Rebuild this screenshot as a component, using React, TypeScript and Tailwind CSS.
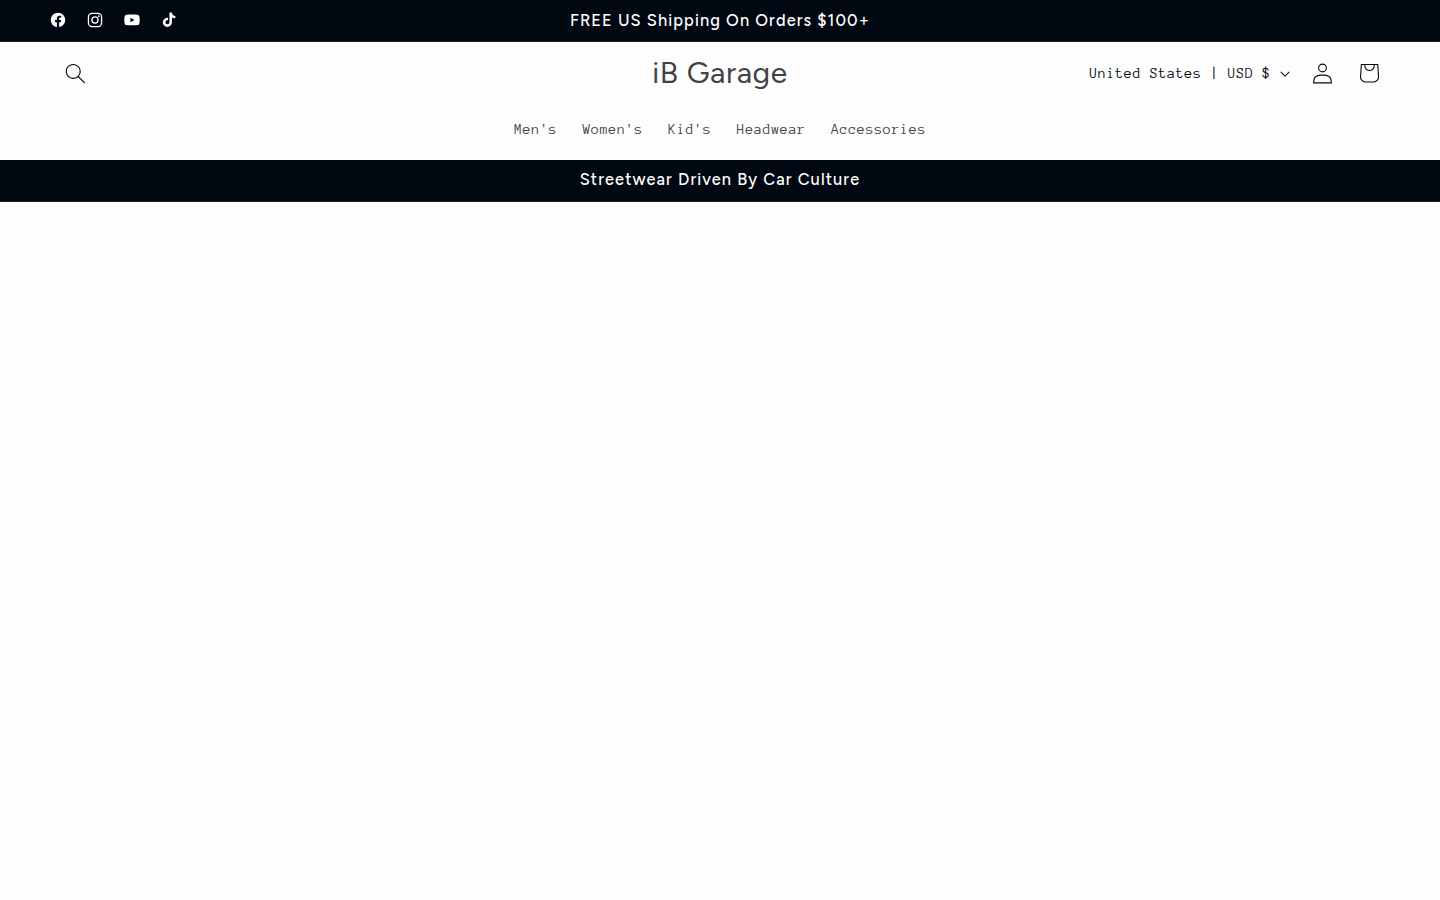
import React from 'react';

const socialLinks = [
  {
    name: 'Facebook',
    icon: (
      <path d="M18 10.049C18 5.603 14.419 2 10 2c-4.419 0-8 3.603-8 8.049C2 14.067 4.925 17.396 8.75 18v-5.624H6.719v-2.328h2.03V8.275c0-2.017 1.195-3.132 3.023-3.132.874 0 1.79.158 1.79.158v1.98h-1.009c-.994 0-1.303.621-1.303 1.258v1.51h2.219l-.355 2.326H11.25V18c3.825-.604 6.75-3.933 6.75-7.951Z" />
    ),
  },
  {
    name: 'Instagram',
    icon: (
      <>
        <rect x="2.72" y="2.72" width="14.56" height="14.56" rx="3.9" fill="none" stroke="currentColor" strokeWidth="1.45" />
        <circle cx="10" cy="10" r="3.4" fill="none" stroke="currentColor" strokeWidth="1.45" />
        <circle cx="14.27" cy="5.73" r="0.96" />
      </>
    ),
  },
  {
    name: 'YouTube',
    icon: (
      <path d="M18.16 5.87c.34 1.309.34 4.08.34 4.08s0 2.771-.34 4.08a2.125 2.125 0 0 1-1.53 1.53c-1.309.34-6.63.34-6.63.34s-5.321 0-6.63-.34a2.125 2.125 0 0 1-1.53-1.53c-.34-1.309-.34-4.08-.34-4.08s0-2.771.34-4.08a2.173 2.173 0 0 1 1.53-1.53C4.679 4 10 4 10 4s5.321 0 6.63.34a2.173 2.173 0 0 1 1.53 1.53ZM8.3 12.5l4.42-2.55L8.3 7.4v5.1Z" />
    ),
  },
  {
    name: 'TikTok',
    icon: (
      <path d="M10.511 1.705h2.74s-.157 3.51 3.795 3.768v2.711s-2.114.129-3.796-1.158l.028 5.606A5.073 5.073 0 1 1 8.213 7.56h.708v2.785a2.298 2.298 0 1 0 1.618 2.205L10.51 1.705Z" />
    ),
  },
];

const menuItems = ["Men's", "Women's", "Kid's", 'Headwear', 'Accessories'];

function AnnouncementBar() {
  return (
    <div className="grid h-[42px] grid-cols-[1fr_auto_1fr] items-center border-b border-[#191e27] bg-[#010811] px-[39px] text-white">
      <ul className="flex">
        {socialLinks.map((link) => (
          <li key={link.name}>
            <a href="#" aria-label={link.name} className="flex h-10 w-[37px] items-center justify-center pb-px">
              <svg viewBox="0 0 20 20" className="h-[18px] w-[18px]" fill="currentColor">
                {link.icon}
              </svg>
            </a>
          </li>
        ))}
      </ul>
      <p className="font-['Figtree','Lato',sans-serif] text-[16.38px] font-[460] tracking-[1.1px] whitespace-nowrap">
        FREE US Shipping On Orders $100+
      </p>
    </div>
  );
}

function Header() {
  return (
    <header className="h-[118px] text-[#010811]">
      <div className="grid h-[62px] grid-cols-[1fr_auto_1fr] items-center px-[49px]">
        <button aria-label="Search" className="ml-[4px] flex h-11 w-11 items-center justify-center">
          <svg viewBox="0 0 18 19" className="h-[21px] w-[21px]" fill="currentColor">
            <path
              fillRule="evenodd"
              clipRule="evenodd"
              d="M11.03 11.68A5.784 5.784 0 112.85 3.5a5.784 5.784 0 018.18 8.18zm.26 1.12a6.78 6.78 0 11.72-.7l5.4 5.4a.5.5 0 11-.71.7l-5.41-5.4z"
            />
          </svg>
        </button>
        <a href="#" className="font-['Figtree','Lato',sans-serif] text-[30px] leading-none tracking-[0.6px] text-[#3f4349]">
          iB Garage
        </a>
        <div className="flex items-center justify-end">
          <button className="flex items-center font-['Anonymous_Pro','Liberation_Mono',monospace] text-[14.7px] tracking-[0.63px] whitespace-pre">
            <span className="pt-0.5">United States | USD $</span>
            <svg viewBox="0 0 10 6" className="mt-0.5 ml-[9px] h-[6.3px] w-2.5" fill="currentColor">
              <path d="M9.354.646a.5.5 0 00-.708 0L5 4.293 1.354.646a.5.5 0 00-.708.708l4 4a.5.5 0 00.708 0l4-4a.5.5 0 000-.708z" />
            </svg>
          </button>
          <a href="#" aria-label="Log in" className="ml-2.5 flex h-11 w-11 items-center justify-center">
            <svg viewBox="0 0 18 19" className="h-[21px] w-[21px]" fill="currentColor">
              <path
                fillRule="evenodd"
                clipRule="evenodd"
                d="M6 4.5a3 3 0 116 0 3 3 0 01-6 0zm3-4a4 4 0 100 8 4 4 0 000-8zm5.58 12.15c1.12.82 1.83 2.24 1.91 4.85H1.51c.08-2.6.79-4.03 1.9-4.85C4.66 11.75 6.5 11.5 9 11.5s4.35.26 5.58 1.15zM9 10.5c-2.5 0-4.65.24-6.17 1.35C1.27 12.98.5 14.93.5 18v.5h17V18c0-3.07-.77-5.02-2.33-6.15-1.52-1.1-3.67-1.35-6.17-1.35z"
              />
            </svg>
          </a>
          <a href="#" aria-label="Cart" className="ml-[3px] flex h-11 w-11 items-center justify-center">
            <svg viewBox="0 0 40 40" className="h-11 w-11" fill="currentColor">
              <path
                fillRule="evenodd"
                d="M15.75 11.8h-3.16l-.77 11.6a5 5 0 004.99 5.34h7.38a5 5 0 004.99-5.33L28.4 11.8zm0 1h-2.22l-.71 10.67a4 4 0 003.99 4.27h7.38a4 4 0 004-4.27l-.72-10.67h-2.22v.63a4.75 4.75 0 11-9.5 0zm8.5 0h-7.5v.63a3.75 3.75 0 107.5 0z"
              />
            </svg>
          </a>
        </div>
      </div>
      <nav className="flex h-[53px] items-center justify-center gap-[25.2px] pl-[0.5px] font-['Anonymous_Pro','Liberation_Mono',monospace] text-[14.7px] tracking-[0.63px] text-[#40454c]">
        {menuItems.map((item) => (
          <a key={item} href="#">
            {item}
          </a>
        ))}
      </nav>
    </header>
  );
}

export default function App() {
  return (
    <div className="min-h-screen bg-[#fdfdfd]">
      <AnnouncementBar />
      <Header />
      <div className="flex h-[42px] items-center justify-center border-b border-[#191e27] bg-[#010811] pb-0.5 font-['Figtree','Lato',sans-serif] text-[16.38px] font-[460] tracking-[1.1px] text-white">
        Streetwear Driven By Car Culture
      </div>
    </div>
  );
}
